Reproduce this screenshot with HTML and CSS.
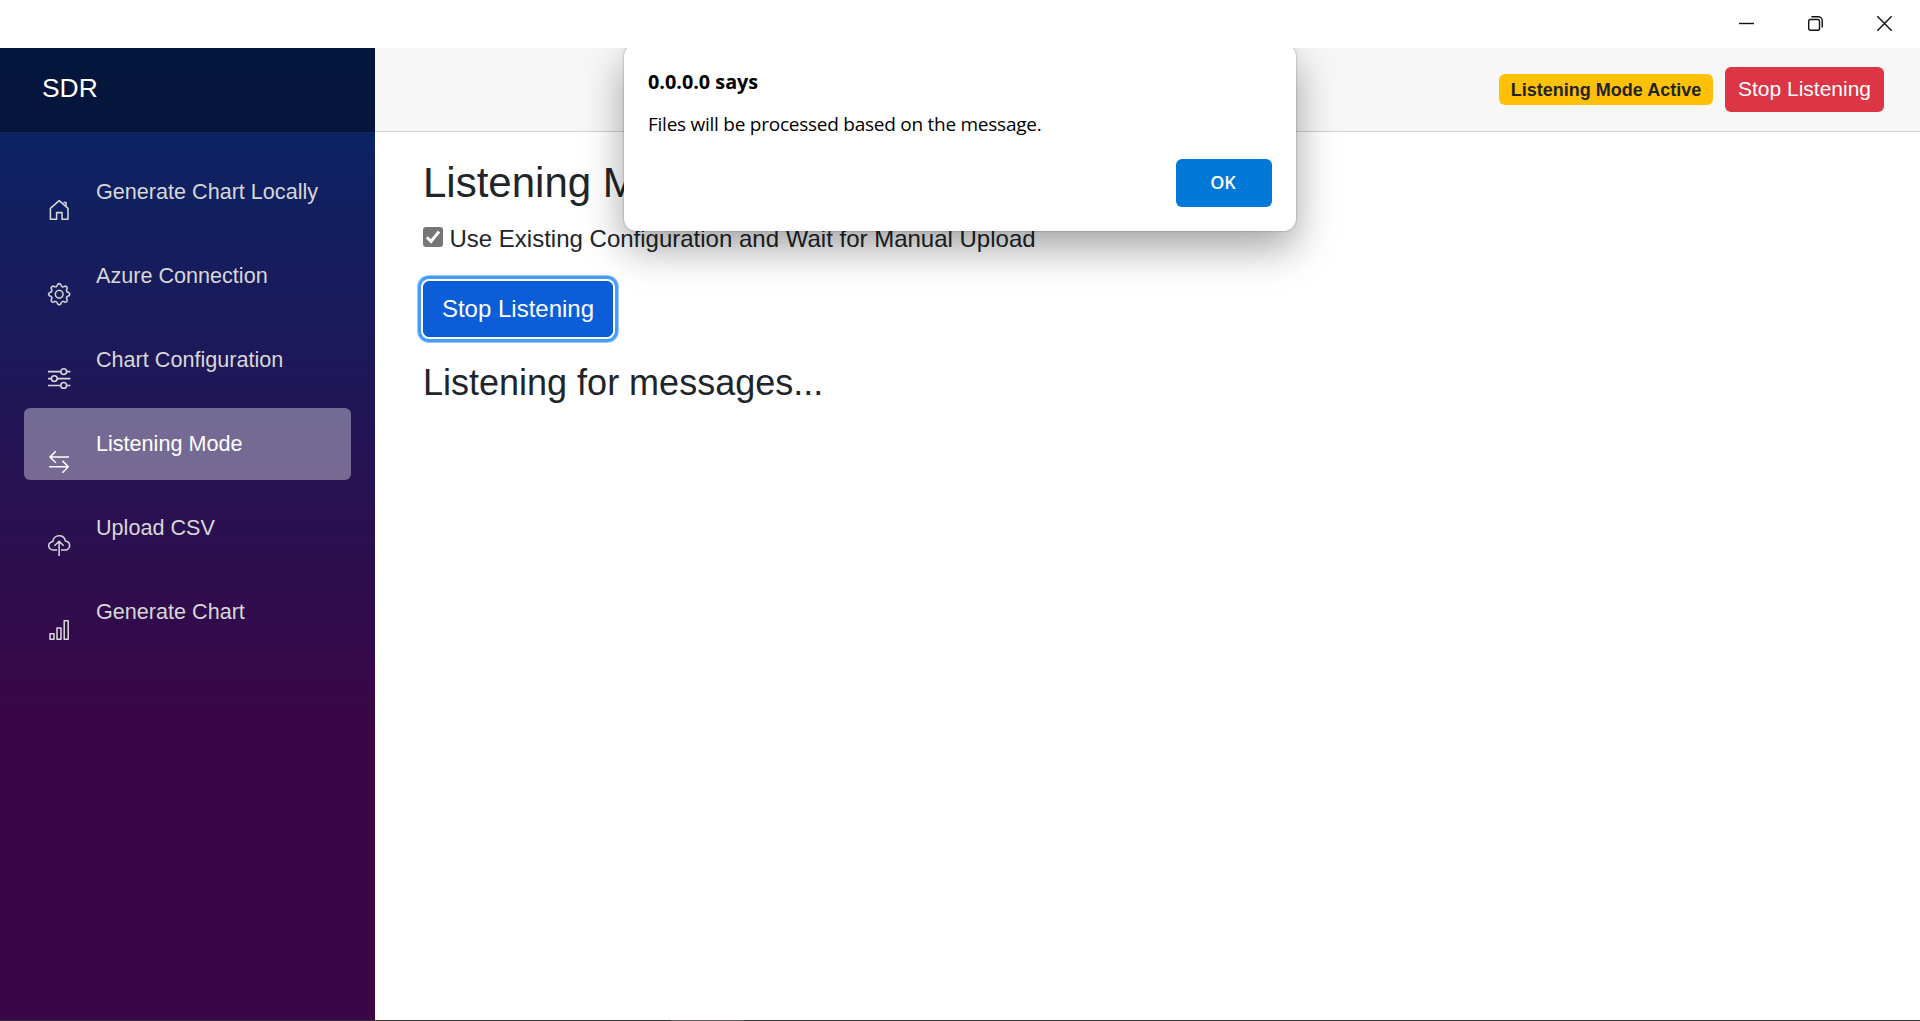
FILE: index.html
```html
<!DOCTYPE html>
<html lang="en">
<head>
<meta charset="utf-8">
<title>SDR</title>
<link rel="stylesheet" href="styles.css">
</head>
<body>
<div class="window">
  <header class="titlebar">
    <span class="caption"><svg width="15" height="15" viewBox="0 0 15 15"><path d="M0 7.5h15"/></svg></span>
    <span class="caption"><svg width="15" height="15" viewBox="0 0 15 15"><rect x=".7" y="3.5" width="10.8" height="10.8" rx="1.8"/><path d="M3.4.8h6.8a4 4 0 0 1 4 4v6.6"/></svg></span>
    <span class="caption"><svg width="15" height="15" viewBox="0 0 15 15"><path d="M.3.3l14.4 14.4M14.7.3L.3 14.7"/></svg></span>
  </header>
  <div class="page">
    <aside class="sidebar">
      <div class="brand">SDR</div>
      <nav class="nav">
        <a class="link"><svg class="icon" viewBox="0 0 24 24"><path d="M2.4 21.3V10.3L11.2 2.7 20 10.3V21.3H14V14.6H8.6V21.3Z"/><path d="M15.5 4.5H18V8"/></svg>Generate Chart Locally</a>
        <a class="link"><svg class="icon" viewBox="0 0 24 24"><g class="solid" transform="translate(0 1) scale(1.4)"><path d="M8 4.754a3.246 3.246 0 1 0 0 6.492 3.246 3.246 0 0 0 0-6.492zM5.754 8a2.246 2.246 0 1 1 4.492 0 2.246 2.246 0 0 1-4.492 0z"/><path d="M9.796 1.343c-.527-1.79-3.065-1.79-3.592 0l-.094.319a.873.873 0 0 1-1.255.52l-.292-.16c-1.64-.892-3.433.902-2.54 2.541l.159.292a.873.873 0 0 1-.52 1.255l-.319.094c-1.79.527-1.79 3.065 0 3.592l.319.094a.873.873 0 0 1 .52 1.255l-.16.292c-.892 1.64.901 3.434 2.541 2.54l.292-.159a.873.873 0 0 1 1.255.52l.094.319c.527 1.79 3.065 1.79 3.592 0l.094-.319a.873.873 0 0 1 1.255-.52l.292.16c1.64.893 3.434-.902 2.54-2.541l-.159-.292a.873.873 0 0 1 .52-1.255l.319-.094c1.79-.527 1.79-3.065 0-3.592l-.319-.094a.873.873 0 0 1-.52-1.255l.16-.292c.893-1.64-.902-3.433-2.541-2.54l-.292.159a.873.873 0 0 1-1.255-.52l-.094-.319zm-2.633.283c.246-.835 1.428-.835 1.674 0l.094.319a1.873 1.873 0 0 0 2.693 1.115l.291-.16c.764-.415 1.6.42 1.184 1.185l-.159.292a1.873 1.873 0 0 0 1.116 2.692l.318.094c.835.246.835 1.428 0 1.674l-.319.094a1.873 1.873 0 0 0-1.115 2.693l.16.291c.415.764-.42 1.6-1.185 1.184l-.291-.159a1.873 1.873 0 0 0-2.693 1.116l-.094.318c-.246.835-1.428.835-1.674 0l-.094-.319a1.873 1.873 0 0 0-2.692-1.115l-.292.16c-.764.415-1.6-.42-1.184-1.185l.159-.291A1.873 1.873 0 0 0 1.945 8.93l-.319-.094c-.835-.246-.835-1.428 0-1.674l.319-.094A1.873 1.873 0 0 0 3.06 4.377l-.16-.292c-.415-.764.42-1.6 1.185-1.184l.292.159a1.873 1.873 0 0 0 2.692-1.115l.094-.319z"/></g></svg>Azure Connection</a>
        <a class="link"><svg class="icon" viewBox="0 0 24 24"><path d="M0 5.6h12.8M18.6 5.6h3.8M0 12.6h3.4M9.2 12.6h13.2M0 19.4h12.8M18.6 19.4h3.8"/><circle cx="15.7" cy="5.6" r="2.9"/><circle cx="6.3" cy="12.6" r="2.9"/><circle cx="15.7" cy="19.4" r="2.9"/></svg>Chart Configuration</a>
        <a class="link active"><svg class="icon" viewBox="0 0 24 24"><path d="M21 7H2M7.8 1.2L2 7l5.8 5.8M1.2 16.8h19M14.4 10.9l5.9 5.9-5.9 5.9"/></svg>Listening Mode</a>
        <a class="link"><svg class="icon" viewBox="0 0 24 24"><path d="M9.2 15.9H5.4C2.7 15.9.7 14.1.7 11.7.7 9.5 2.3 7.900 4.900 7.400 5.200 4 7.800 1.700 11.100 1.700c3.300 0 5.800 2.200 6.200 5.300 2.600.3 4.300 2.100 4.300 4.500s-1.900 4.400-4.400 4.400H13M11.100 22V7M6.500 11.700L11.100 7.200l4.600 4.500"/></svg>Upload CSV</a>
        <a class="link"><svg class="icon" viewBox="0 0 24 24"><path d="M2 15.700h4v5.600H2zM9 10h4v11.300H9zM16.200 2.700h4v18.600h-4z"/></svg>Generate Chart</a>
      </nav>
    </aside>
    <main class="main">
      <div class="toprow">
        <span class="badge">Listening Mode Active</span>
        <button class="stop">Stop Listening</button>
      </div>
      <article class="content">
        <h3>Listening Mode</h3>
        <label class="option"><span class="check"><svg width="20" height="20" viewBox="0 0 20 20"><path d="M3.800 10.200l4.200 4.200L16 4.600"/></svg></span>Use Existing Configuration and Wait for Manual Upload</label>
        <button class="primary">Stop Listening</button>
        <h4>Listening for messages...</h4>
      </article>
    </main>
    <div class="overlay">
      <div class="dialog">
        <div class="origin">0.0.0.0 says</div>
        <div class="message">Files will be processed based on the message.</div>
        <button class="ok">OK</button>
      </div>
    </div>
  </div>
  <footer class="taskedge"><span class="tasktab"></span></footer>
</div>
</body>
</html>
```
FILE: styles.css
```css
* { box-sizing: border-box; }
body {
  margin: 0;
  font: 24px/1.5 "Liberation Sans", Arial, sans-serif;
  color: #212529;
  background: #fff;
}
button { font-family: inherit; }
.window { display: flex; flex-direction: column; height: 1021px; overflow: hidden; }
.titlebar { display: flex; flex: none; justify-content: flex-end; height: 48px; padding: 0 1px 1px 0; background: #fff; }
.caption { display: flex; width: 69px; align-items: center; justify-content: center; }
.caption svg { fill: none; stroke: #111; stroke-width: 1.4; overflow: visible; }
.page { position: relative; display: flex; flex: 1; min-height: 0; overflow: hidden; }

.sidebar { width: 375px; flex: none; background: linear-gradient(180deg, #052767 0%, #3a0647 70%); }
.brand { height: 84px; padding-left: 42px; line-height: 80px; font-size: 26.4px; color: #fff; background: rgba(0, 0, 0, .4); }
.nav { display: flex; flex-direction: column; gap: 12px; padding: 24px; }
.link { display: flex; height: 72px; padding-left: 24px; line-height: 71px; font-size: 21.6px; color: #d7d7d7; border-radius: 6px; white-space: nowrap; }
.active { color: #fff; background: rgba(255, 255, 255, .37); }
.icon { width: 24px; height: 24px; margin: 42px 24px 0 0; fill: none; stroke: currentColor; stroke-width: 1.55; stroke-linejoin: round; overflow: visible; }
.solid { fill: currentColor; stroke: currentColor; stroke-width: .12; }

.main { flex: 1; }
.toprow { display: flex; align-items: center; justify-content: flex-end; gap: 12px; height: 84px; padding: 0 36px 1px 0; background: #f7f7f7; border-bottom: 1px solid #d0d0d0; }
.badge { height: 31px; width: 214px; text-align: center; font-size: 18px; font-weight: 700; line-height: 32px; background: #ffc107; border-radius: 6px; white-space: nowrap; }
.stop { height: 45px; width: 159px; padding: 0; font-size: 21px; color: #fff; background: #dc3545; border: 0; border-radius: 6px; }

.content { padding: 26.4px 36px 0 48px; }
h3 { margin: 0 0 12px; font-size: 42px; font-weight: 400; line-height: 50.4px; }
.option { display: flex; height: 36px; gap: 6.500px; line-height: 35px; }
.check { width: 20px; height: 20px; margin-top: 6px; background: #767676; border-radius: 3px; display: flex; }
.check svg { fill: none; stroke: #fff; stroke-width: 3; }
.primary { display: block; width: 190px; height: 56px; margin: 24px 0; padding: 0; font-size: 24px; color: #fff; background: #0b5ed7; border: 1px solid #0a58ca; border-radius: 6px; box-shadow: 0 0 0 2px #fff, 0 0 0 5px #459cfc, 0 0 0 6px #9ccbfd; }
h4 { margin: 0; font-size: 36px; font-weight: 400; line-height: 43.2px; }

.overlay { position: absolute; inset: 0; overflow: hidden; }
.dialog { position: absolute; left: 624px; top: -4px; display: flex; flex-direction: column; width: 672px; height: 187px; padding: 21px 24px 24px; background: #fff; border-radius: 12px; box-shadow: 0 0 2px rgba(0, 0, 0, .4), 0 17px 40px rgba(0, 0, 0, .36); font-family: "Open Sans", "Noto Sans", sans-serif; color: #000; }
.origin { height: 34px; font-size: 19.8px; font-weight: 700; line-height: 34px; }
.message { font-size: 19px; letter-spacing: -.25px; line-height: 50px; white-space: nowrap; }
.ok { width: 96px; height: 48px; margin-top: auto; align-self: flex-end; padding: 0 2px 2px 0; font-size: 18px; font-weight: 600; color: #fff; background: #0078d7; border: 0; border-radius: 6px; }

.taskedge { display: flex; flex: none; height: 1px; padding-left: 671px; background: #37322d; }
.tasktab { width: 73px; background: #625e5a; }
```
